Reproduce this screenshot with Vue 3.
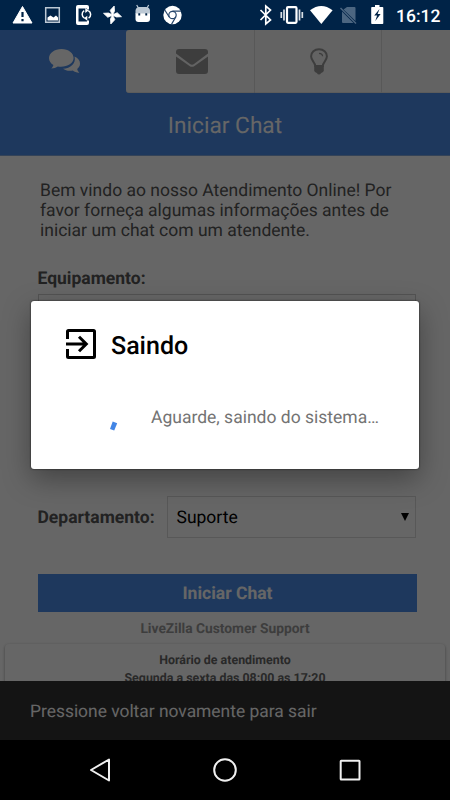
<script setup>
const intro = [
  'Bem vindo ao nosso Atendimento Online! Por',
  'favor forneça algumas informações antes de',
  'iniciar um chat com um atendente.'
]
const blades = [0, 90, 180, 270]
</script>

<template>
  <div class="screen">
    <header class="status">
      <svg class="st-left" viewBox="0 0 200 30">
        <path d="M22.500 6.500 32 23H13Z" fill="#fff" stroke="#fff" stroke-width="1" stroke-linejoin="round" />
        <path d="M21.400 12h2.200v5h-2.200zM21.400 19h2.200v2.200h-2.200z" fill="#002347" />
        <path d="M45.700 7.700h13.600v14.600H45.700z" fill="none" stroke="#bcc8d4" stroke-width="1.500" />
        <path d="M47.500 20.500v-3l3-2 3 2 2.500-2 2 2v3z" fill="#fff" />
        <path d="M89 9.500V7a2 2 0 0 0-2-2h-9a2 2 0 0 0-2 2v16a2 2 0 0 0 2 2h9a2 2 0 0 0 2-2v-2.500h-2V21.500h-8.500V8.500H87v1z" fill="#fff" />
        <path d="M84.500 18.200a4.300 4.300 0 0 1-.3-7.500M88.300 10.700a4.300 4.300 0 0 1 .3 7.500" fill="none" stroke="#fff" stroke-width="1.500" />
        <path d="m85.300 8 3.300 2.500-3.300 2.500zM87.300 15.800v5L84 18.300z" fill="#fff" />
        <path v-for="a in blades" :key="a" :transform="`rotate(${a} 112.500 15)`" d="M112.500 15.300 110.200 10.300 114.200 6l.3 5z" fill="#fff" stroke="#fff" stroke-width=".8" />
        <path d="M135.500 14v-3.500a4 4 0 0 1 4-3.500h6.500a4 4 0 0 1 4 3.500V14z" fill="#bcc8d4" />
        <path d="M135.500 13.500h14.500V19a3 3 0 0 1-3 3h-8.500a3 3 0 0 1-3-3z" fill="#fff" />
        <path d="m136.700 5 2 3.500m10-3.500-2 3.500" stroke="#bcc8d4" stroke-width="1.200" />
        <path d="M138.300 13.300h1.900v2.200h-1.900zM145.300 13.300h1.900v2.200h-1.900z" fill="#002347" />
        <circle cx="172.500" cy="15" r="9.200" fill="#fff" />
        <circle cx="172.500" cy="15" r="3.700" fill="none" stroke="#26456b" stroke-width="1.200" />
        <path d="M172.500 11.200h8.400M169.200 17l-4.600-7.200M175.900 16.800l-4.300 7.300" stroke="#26456b" stroke-width="1.200" />
      </svg>
      <svg class="st-right" viewBox="250 0 140 30">
        <path d="m260.500 10 10 10-4.700 4V6l4.700 4-10 10" fill="none" stroke="#fff" stroke-width="1.700" />
        <rect x="287" y="7.200" width="9.500" height="15.600" rx="1" fill="none" stroke="#fff" stroke-width="2.200" />
        <path d="M284 9.500v11m15.500-11v11M281.300 12v6m21-6v6" stroke="#d9e0e6" stroke-width="1.700" />
        <path d="M310 10.300q11.300-8.600 22.600 0L321.300 24z" fill="#fff" />
        <path d="M347 7h7.500q1 0 1 1v13L343.500 9.500zM342 11.500 353.500 23H343q-1 0-1-1z" fill="#4c6681" />
        <path d="m340.500 8 15.500 15.500" stroke="#4c6681" stroke-width="1.400" />
        <path d="M372 7h3V5h4.500v2h3q.8 0 .8.800v15.400q0 .8-.8.800H372q-.8 0-.8-.8V7.800q0-.8.800-.8z" fill="#fff" />
        <path d="m379.500 9-5.300 6.600h2.900L375.300 21l5.300-7h-3z" fill="#002347" />
      </svg>
      <span class="clock">16:12</span>
    </header>

    <main class="app">
      <nav class="tabs">
        <div class="tab active">
          <svg width="32" height="26" viewBox="0 0 32 26">
            <path d="M25.500 7.500c3.500 1.500 5.500 4 5.500 7 0 2.500-1 4-2.800 5.400.3 1.700 1.300 2.800 2.300 3.700-2.500.2-4.700-.5-6.700-2-4.300.7-7.500-.2-9.800-1.800 7.500-.5 13.500-5.300 11.500-12.300z" fill="#fff" />
            <path d="M12.500 0C5.500 0 0 4 0 9c0 3 1.800 5.400 4.400 7-.4 1.600-1.200 2.500-2.100 3.400 2.600 0 4.700-.7 6.500-2 8.200 1.200 15.800-2.500 15.800-8.400 0-5-5.100-9-12.100-9z" fill="#fff" />
          </svg>
        </div>
        <div class="tab">
          <svg width="32" height="25" viewBox="0 0 32 25">
            <path d="M0 3a3 3 0 0 1 3-3h26a3 3 0 0 1 3 3v1.500L18 15q-2 1.400-4 0L0 4.500z" fill="#999" />
            <path d="M0 7.500 13.500 17q2.500 1.700 5 0L32 7.500V22a3 3 0 0 1-3 3H3a3 3 0 0 1-3-3z" fill="#999" />
          </svg>
        </div>
        <div class="tab idea">
          <svg width="18" height="27" viewBox="0 0 18 27">
            <path d="M5.200 18c0-4-4.100-5-4.100-9.700C1.100 4.200 4.500 1.200 9 1.200s7.900 3 7.900 7.100c0 4.700-4.100 5.700-4.100 9.700z" fill="none" stroke="#999" stroke-width="2" />
            <path d="M9 5.300q3.500.2 3.600 3" fill="none" stroke="#999" stroke-width="1.200" />
            <path d="M4.200 18h9.600v5q-1 1.600-2.600 2-2.200 3-4.400 0-1.600-.4-2.600-2z" fill="#999" />
          </svg>
        </div>
        <div class="tab last"></div>
      </nav>
      <h1 class="title">Iniciar Chat</h1>

      <p class="intro"><span v-for="line in intro" :key="line">{{ line }}</span></p>

      <label class="equip">Equipamento:</label>
      <div class="input"></div>

      <div class="dept">
        <label>Departamento:</label>
        <div class="select">
          <span>Suporte</span>
          <svg width="8" height="8" viewBox="0 0 8 8"><path d="M0 0h8L4 8z" /></svg>
        </div>
      </div>

      <button class="start">Iniciar Chat</button>
      <div class="brand">LiveZilla Customer Support</div>
      <div class="hours">
        <div>Horário de atendimento</div>
        <div>Segunda a sexta das 08:00 as 17:20</div>
      </div>
      <div class="snack"><span>Pressione voltar novamente para sair</span></div>

      <div class="scrim">
        <section class="dialog">
          <div class="head">
            <svg width="30" height="30" viewBox="0 0 30 30">
              <path d="M1.500 10V2.500q0-1 1-1h25q1 0 1 1v25q0 1-1 1h-25q-1 0-1-1V20" fill="none" stroke="#000" stroke-width="3" />
              <path d="M0 15h20M13 7.700l7.300 7.300-7.300 7.300" fill="none" stroke="#000" stroke-width="3" />
            </svg>
            <h2>Saindo</h2>
          </div>
          <div class="body">
            <svg width="8" height="11" viewBox="0 0 8 11"><path d="m2.700.6 4.500 1.600-3 7.400L0 8z" fill="#4285e5" /></svg>
            <span>Aguarde, saindo do sistema…</span>
          </div>
        </section>
      </div>
    </main>

    <footer class="nav">
      <svg width="450" height="60" viewBox="0 0 450 60" fill="none" stroke="#f0f0f0" stroke-width="2">
        <path d="M109 19.500v21L91 30z" stroke-linejoin="round" />
        <circle cx="225" cy="30" r="10.800" />
        <rect x="340.700" y="20.700" width="18.800" height="18.800" rx=".5" />
      </svg>
    </footer>
  </div>
</template>

<style>
body { margin: 0; }
</style>

<style scoped>
.screen { width: 450px; height: 800px; display: flex; flex-direction: column; overflow: hidden; font-family: Roboto, sans-serif; background: #fff; text-rendering: geometricPrecision; }
svg { display: block; flex: none; }
.status { height: 30px; flex: none; display: flex; align-items: center; background: #002347; color: #fff; }
.st-left { width: 200px; height: 30px; }
.st-right { width: 140px; height: 30px; margin-left: 50px; }
.clock { font-size: 17.5px; font-weight: 500; line-height: 30px; margin-left: 6px; padding-top: 2px; box-sizing: border-box; height: 30px; }
.app { position: relative; height: 710px; flex: none; display: flex; flex-direction: column; overflow: hidden; }
.tabs { display: grid; grid-template-columns: 126px 129px 127px 68px; height: 63px; flex: none; background: #4b8ce8; }
.tab { display: flex; align-items: center; justify-content: center; box-sizing: border-box; background: #f7f7f7; border-right: 1px solid #ddd; border-bottom: 1px solid #e5e5e5; padding-left: 3px; }
.tab:nth-child(2) { border-radius: 3px 0 0 3px; }
.tab.active { background: #4b8ce8; border: 0; }
.tab.idea { padding-left: 2px; padding-right: 1px; }
.tab.last { border-right: 0; }
.title { margin: 0; height: 62px; flex: none; background: #4b8ce8; border-bottom: 1px solid #82a7dc; color: #fff; font-size: 22.7px; font-weight: 400; line-height: 65px; text-align: center; }
.intro { margin: 25px 0 0 40px; font-size: 17.5px; line-height: 20px; color: #555; flex: none; }
.intro span { display: block; white-space: nowrap; }
.equip, .dept label { font-size: 17.5px; font-weight: 700; color: #555; line-height: 20px; }
.equip { margin: 28px 0 0 37.5px; }
.input { margin: 5px 34px 0 38px; height: 38px; flex: none; border: 1px solid #d0d0d0; box-sizing: border-box; }
.dept { margin: 164px 34px 0 37.5px; height: 42px; flex: none; display: flex; align-items: center; justify-content: space-between; }
.dept label { padding-top: 1px; }
.select { width: 249px; height: 42px; box-sizing: border-box; border: 1px solid #ddd; padding: 0 6px 0 8.5px; display: flex; align-items: center; justify-content: space-between; font-size: 17.5px; color: #000; }
.select span { padding-top: 1px; }
.start { margin: 36px 33px 0 38px; height: 38px; flex: none; border: 0; padding: 1px 0 0; background: #4b8ce8; color: #fff; font: 700 17.5px/38px Roboto, sans-serif; text-rendering: inherit; }
.brand { margin-top: 7px; text-align: center; font-size: 13.8px; line-height: 20px; font-weight: 700; color: #999; flex: none; }
.hours { margin: 5px 5px 0; padding-top: 8px; height: 80px; flex: none; border-radius: 4px; box-shadow: 0 1px 3px #999; text-align: center; font-size: 12.4px; font-weight: 700; line-height: 17.5px; color: #666; }
.snack { position: absolute; left: 0; right: 0; bottom: 0; height: 59px; background: #323232; color: #fff; font-size: 17.4px; line-height: 63px; padding-left: 30px; }
.scrim { position: absolute; inset: 0; background: rgba(0, 0, 0, .6); }
.dialog { margin: 271px 31px 0; height: 168px; box-sizing: border-box; padding: 28px 35px 0; background: #fff; border-radius: 3px; box-shadow: 0 0 2px rgba(0, 0, 0, .8), 0 10px 28px rgba(0, 0, 0, .35); }
.head { display: flex; align-items: flex-start; gap: 15px; height: 32px; }
h2 { margin: 0; font-size: 25px; line-height: 30px; font-weight: 500; color: #000; padding-top: 3px; }
.body { display: flex; margin: 44px 0 0 43.500px; gap: 33.500px; color: #737373; font-size: 17.5px; line-height: 20px; white-space: nowrap; }
.body svg { margin-top: 16px; }
.body span { margin-top: 3px; }
.nav { height: 60px; flex: none; background: #000; }
</style>
